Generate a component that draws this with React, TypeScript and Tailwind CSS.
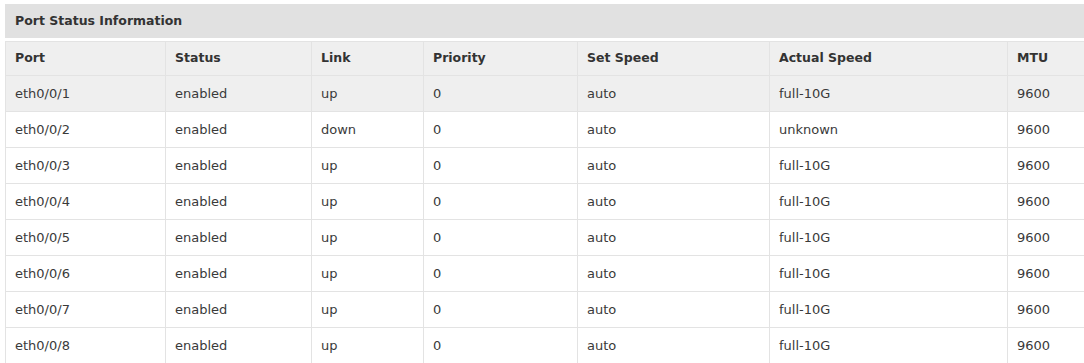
const COLUMNS = [
  { label: 'Port', width: 'w-[160px]' },
  { label: 'Status', width: 'w-[146px]' },
  { label: 'Link', width: 'w-[112px]' },
  { label: 'Priority', width: 'w-[154px]' },
  { label: 'Set Speed', width: 'w-[192px]' },
  { label: 'Actual Speed', width: 'w-[238px]' },
  { label: 'MTU', width: 'w-[77px]' },
]

const ROWS = [
  ['eth0/0/1', 'enabled', 'up', '0', 'auto', 'full-10G', '9600'],
  ['eth0/0/2', 'enabled', 'down', '0', 'auto', 'unknown', '9600'],
  ['eth0/0/3', 'enabled', 'up', '0', 'auto', 'full-10G', '9600'],
  ['eth0/0/4', 'enabled', 'up', '0', 'auto', 'full-10G', '9600'],
  ['eth0/0/5', 'enabled', 'up', '0', 'auto', 'full-10G', '9600'],
  ['eth0/0/6', 'enabled', 'up', '0', 'auto', 'full-10G', '9600'],
  ['eth0/0/7', 'enabled', 'up', '0', 'auto', 'full-10G', '9600'],
  ['eth0/0/8', 'enabled', 'up', '0', 'auto', 'full-10G', '9600'],
]

export default function App() {
  return (
    <div className="bg-white pl-[5px] pt-[4px] text-[13px] text-[#333] [font-family:'DejaVu_Sans',Verdana,sans-serif]">
      <div className="flex h-[34px] items-center bg-[#e1e1e1] px-[10px] text-[12.5px] font-bold">
        Port Status Information
      </div>
      <table className="mt-[3px] w-[1079px] table-fixed border-collapse">
        <colgroup>
          {COLUMNS.map((col) => (
            <col key={col.label} className={col.width} />
          ))}
        </colgroup>
        <thead>
          <tr className="h-[34px] bg-[#efefef]">
            {COLUMNS.map((col) => (
              <th key={col.label} className="border border-[#e3e3e3] px-[9px] text-left text-[12.5px] font-bold">
                {col.label}
              </th>
            ))}
          </tr>
        </thead>
        <tbody>
          {ROWS.map((row, i) => (
            <tr key={row[0]} className={i === 0 ? 'h-[36px] bg-[#efefef]' : 'h-[36px] bg-white'}>
              {row.map((cell, j) => (
                <td key={j} className="border border-[#e3e3e3] px-[9px] text-[#3a3a3a]">
                  {cell}
                </td>
              ))}
            </tr>
          ))}
        </tbody>
      </table>
    </div>
  )
}
